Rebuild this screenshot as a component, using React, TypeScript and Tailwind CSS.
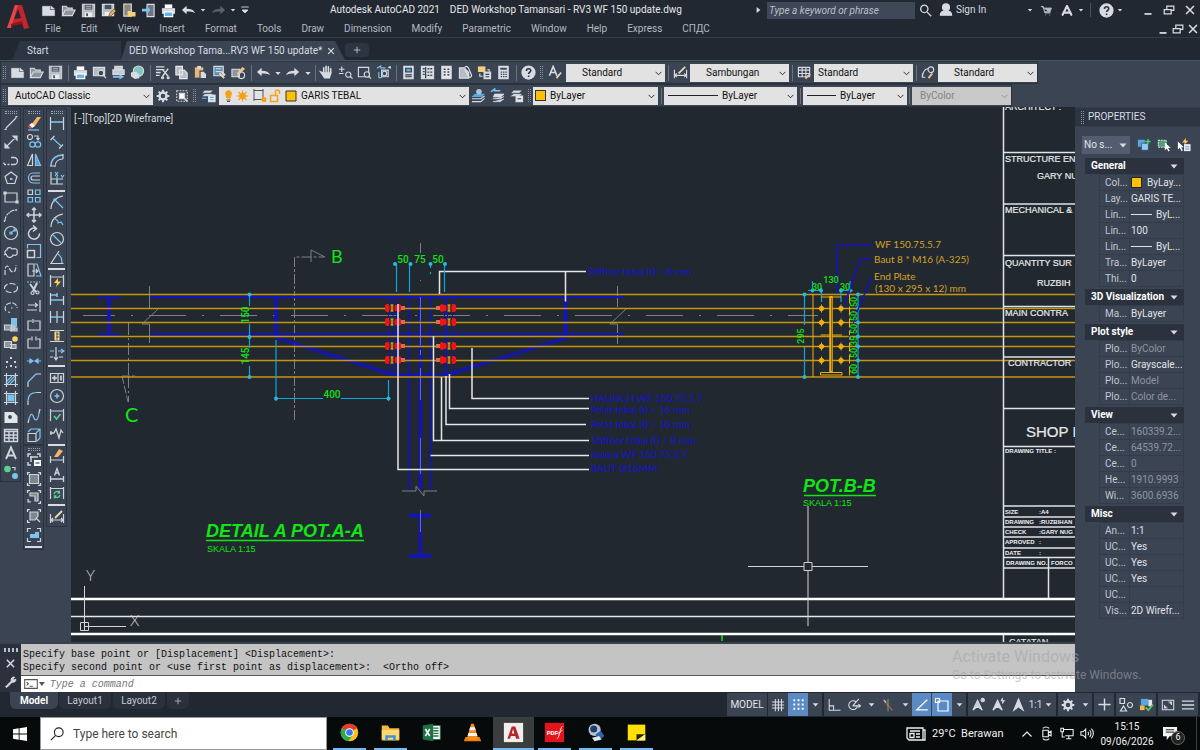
import type { ReactNode } from 'react';

const LIGHT = '#d8dce2';
const BLUE = '#7cc3ee';

/* 16x16 glyphs, stroked with currentColor unless a shape says otherwise */
const glyphs: Record<string, ReactNode> = {
  new: <path d="M1.500 3.500h8v4h5v6h-13zM10.500 3v3.500h4z" fill={LIGHT} strokeWidth="0.5" />,
  open: <path d="M1.500 13.500v-10h4l1.500 2h5v2M1.500 13.500l3-6h10.500l-3 6z" fill="#8d949e" />,
  save: (
    <g>
      <path d="M1.500 1.500h13v13h-13z" fill="#b9bec6" stroke="#c9cdd3" />
      <path d="M4 2h8v5h-8z" fill="#4a5260" stroke="none" />
      <path d="M5 3.500h6M5 5.500h6" strokeWidth="0.800" />
      <path d="M4 10h8v5h-8z" fill="#e8eaed" stroke="none" />
      <path d="M5.500 11h2v3h-2z" fill="#4a5260" stroke="none" />
    </g>
  ),
  saveas: (
    <g>
      <path d="M1.500 1.500h12v12h-12z" fill="#b9bec6" />
      <path d="M4 2h7v4.500h-7z" fill="#4a5260" stroke="none" />
      <path d="M4 9.500h5v4h-5z" fill="#f0f0f0" stroke="none" />
      <path d="M8 15l1-3.500 5-5 2 2-5 5z" fill="#f2b25c" stroke="#3a2a18" strokeWidth="0.600" />
    </g>
  ),
  openMobile: (
    <g>
      <path d="M3 1h8v13h-8z" fill="#8b8778" />
      <path d="M7 14.500v-6h3l1 1h4.500v5z" fill="#f4cf7c" stroke="none" />
    </g>
  ),
  saveMobile: (
    <g>
      <path d="M6.500 1.500h7.500v13h-7.500z" fill="#6f7680" />
      <path d="M1 6h5v-3l4 4.500-4 4.500v-3h-5z" fill={BLUE} stroke="none" />
    </g>
  ),
  print: (
    <g>
      <path d="M4 1.500h8v4h-8z" fill="#fff" stroke="none" />
      <path d="M1 5.500h14v6h-14z" fill="#d8dce2" stroke="none" />
      <path d="M3.500 9.500h9v5h-9z" fill="#66b5ea" stroke="#fff" />
    </g>
  ),
  undo: <path d="M1 7.500l5-4.500v3c5 0 8 1.500 9 5-2.500-2-5-2-9-2v3z" fill={LIGHT} stroke="none" />,
  redo: <path d="M15 7.500l-5-4.500v3c-5 0-8 1.500-9 5 2.500-2 5-2 9-2v3z" fill="currentColor" stroke="none" />,
  caret: <path d="M4.500 6.500h7l-3.500 4z" fill={LIGHT} stroke="none" />,
  customise: <path d="M3 4h10M4 8h8l-4 4z" fill={LIGHT} />,
  search: <path d="M6.500 1.500a4.500 4.500 0 1 0 .01 0zM10 10l5 5" strokeWidth="1.600" />,
  user: <path d="M8 1a3.500 3.500 0 0 1 0 8a3.500 3.500 0 0 1 0-8M1.500 14c0-4 3-5 6.500-5s6.500 1 6.500 5z" fill={LIGHT} />,
  cart: <path d="M1 3h3l2 8h7M4 5h10l-1.500 4.500h-7.500M6.500 13.500h1M11.500 13.500h1" fill="#b6bcc5" />,
  adsk: <path d="M8 3.500L3 13.500M8 3.500l5 10M4 11h8" strokeWidth="2.400" strokeLinecap="round" />,
  help: (
    <g>
      <circle cx="8" cy="8" r="7" fill={LIGHT} />
      <path d="M5.800 6.300c0-3 4.600-3 4.600-.2 0 1.700-2.300 1.600-2.300 3.600M8.100 11.300v1.400" stroke="#2c3440" strokeWidth="1.700" />
    </g>
  ),
  minimise: <path d="M4 12.500h8" strokeWidth="2" />,
  restore: <path d="M2.500 7.500h8v5h-8zM5.500 7v-3.500h8v5h-3" strokeWidth="1.400" />,
  close: <path d="M3.500 3.500l9 9M12.500 3.500l-9 9" strokeWidth="1.800" />,
  preview: (
    <g>
      <path d="M1.500 2.500h12v9h-12z" fill="#b6bcc5" />
      <circle cx="9.500" cy="8.500" r="3" fill="#3b4453" />
      <path d="M12 11l3 3" />
    </g>
  ),
  publish: (
    <g>
      <path d="M4 1.500h8v3h-8zM2 5h12v5h-12z" fill="#c8ccd2" />
      <path d="M2 11.500h7v-2l5 3-5 3v-2h-7z" fill={BLUE} stroke="none" />
    </g>
  ),
  globe: (
    <g>
      <circle cx="9" cy="6.500" r="5.500" fill="#7fc9a0" />
      <path d="M6 3l4 2-1 4 4 1" stroke={BLUE} strokeWidth="2" />
      <path d="M1 8l5-1 4 3v4l-5 1-4-3z" fill="#d8dce2" stroke="none" />
    </g>
  ),
  cut: <path d="M1 2h9M1 5h9M1 8h5M1 11h4M14 4l-6 8M8 5l6 7M8 12.500h.1a1 1 0 1 1-.1 0M14 12.500h.1a1 1 0 1 1-.1 0" strokeWidth="1.400" />,
  copy: <path d="M2 1.500h7v9h-7zM6 5.500h5l3 3v6h-8z" fill="#b6bcc5" stroke="#e8eaed" />,
  paste: (
    <g>
      <path d="M2 2.500h9v11h-9z" fill="#e6b673" stroke="none" />
      <path d="M4.500 1h4v3h-4z" fill="#d8dce2" stroke="none" />
      <path d="M7.500 6.500h4l3 3v5h-7z" fill="#d8dce2" stroke="#3b4453" />
    </g>
  ),
  match: (
    <g>
      <path d="M2 1.500h10v10h-10z" fill="#5a8fb5" />
      <path d="M4 4h6M4 7h6" />
      <path d="M8 9l5 5M10 7l4 4" stroke="#f0d9b8" strokeWidth="2" />
    </g>
  ),
  blockEdit: (
    <g>
      <path d="M1 4.500h8v8h-8z" fill="#8d949e" />
      <circle cx="11" cy="11" r="3.500" />
      <path d="M6 9l6-7 3 2-6 6z" fill="#f0c193" stroke="none" />
    </g>
  ),
  pan: <path d="M5 8v-5M7.500 7.500v-6M10 7.500v-5.500M12.500 9v-5M2 7.500l4 6h5l1.500-5h-8z" strokeWidth="1.700" strokeLinecap="round" fill={LIGHT} />,
  zoomRt: <path d="M1 4.500h6M4 1.500v6M1 9h5M11 7.500a2.800 2.800 0 1 0 .01 0M13 12l2.500 2.500" />,
  zoomWin: (
    <g>
      <path d="M1.500 2.500h11v10h-11z" />
      <circle cx="10.500" cy="10" r="2.800" fill="#3b4453" />
      <path d="M12.500 12l2.500 2.500" />
    </g>
  ),
  zoomPrev: (
    <g>
      <path d="M1 3.500l4-2.500v2h5M6 13.500h-3v-6" stroke={BLUE} />
      <path d="M6 5.500h7v7h-7zM15 1v3M13 2.500h3" />
      <circle cx="9" cy="9" r="2.500" fill="#3b4453" />
    </g>
  ),
  palette: (
    <g>
      <path d="M3 1.500h10v13h-10z" fill="#d8dce2" />
      <path d="M5 3.500h6v4h-6z" fill="#58a8e0" stroke="#2b3644" />
      <path d="M4.500 10.500h7M4.500 12.500h7" stroke="#2b3644" />
    </g>
  ),
  design: (
    <g>
      <path d="M1.500 1.500h13v13h-13z" fill="#d8dce2" />
      <path d="M6 2v12M3 4h2M3 7h2M3 10h2M8 4h2M11 4h2M8 7.500h2M11 7.500h2M8 11h2M11 11h2" stroke="#3b4453" strokeWidth="1.400" />
    </g>
  ),
  toolPal: (
    <g>
      <path d="M3 1.500h10v13h-10z" fill="#e2e5e9" />
      <path d="M5 4.500h2M9 4.500h2M5 7.500h2M9 7.500h2M5 10.500h2M9 10.500h2" stroke="#3b4453" strokeWidth="1.600" />
    </g>
  ),
  sheet: (
    <g>
      <path d="M1.500 3h5l5 5v6h-10z" fill="#b6bcc5" />
      <path d="M7 3c2-3 4-1 5 2l2.500 6c0 3-3 3-4 0l-3-6" stroke="#e8eaed" />
    </g>
  ),
  markup: (
    <g>
      <path d="M1 1.500h8v6h-8z" fill="#f4cf7c" stroke="none" />
      <path d="M7.500 7.500h7v7h-7z" fill="#d8dce2" />
      <path d="M3 9v3h3M11 5h2v2" stroke="#e2e5e9" />
      <path d="M9 10h4M9 12.500h4" stroke="#3b4453" />
    </g>
  ),
  calc: (
    <g>
      <path d="M3 1.500h10v13h-10z" fill="#d8dce2" />
      <path d="M4.500 4h7" stroke="#3b4453" strokeWidth="2" />
      <path d="M5 7.500h1.500M7.500 7.500h1.500M10 7.500h1.500M5 10h1.500M7.500 10h1.500M10 10h1.500M5 12.500h1.500M7.500 12.500h1.500M10 12.500h1.500" stroke="#3b4453" strokeWidth="1.300" />
    </g>
  ),
  textStyle: (
    <g>
      <path d="M1.500 11.500l4-10 4 10M3 8h5" strokeWidth="1.700" />
      <path d="M9 14l5-6" stroke="#f0d9b8" strokeWidth="1.800" />
    </g>
  ),
  dimStyle: (
    <g>
      <path d="M1.500 5v9M14.500 5v9M2 11h12M4 9l-2 2 2 2M12 9l2 2-2 2" />
      <path d="M6 9l7-7" stroke="#f0d9b8" strokeWidth="1.800" />
    </g>
  ),
  tableStyle: (
    <g>
      <path d="M1.500 2.500h12v10h-12zM1.500 5.500h12M1.500 9h12M5.500 2.500v10M9.500 2.500v10" />
      <path d="M9 14.500l5-5" stroke="#f0c193" strokeWidth="2" />
    </g>
  ),
  mleader: (
    <g>
      <path d="M1.500 12c1-6 3-8 6-8M1.500 9v4h3" />
      <circle cx="10.500" cy="5" r="3" />
      <path d="M8 14l4-5" stroke="#f0c193" strokeWidth="2" />
    </g>
  ),
  gear: (
    <g>
      <circle cx="8" cy="8" r="4" strokeWidth="2.800" />
      <path d="M8 .8v3M8 12.200v3M.8 8h3M12.200 8h3M3 3l2 2M11 11l2 2M13 3l-2 2M5 11l-2 2" strokeWidth="2.200" />
    </g>
  ),
  wsSettings: (
    <g>
      <path d="M2 2h12v12h-12z" strokeDasharray="2 1.300" />
      <path d="M5 5h6v6h-6z" fill="#fff" />
      <path d="M10 10l4 4" strokeWidth="2" />
    </g>
  ),
  layerProps: (
    <g>
      <path d="M4 2.500h9l-3 3h-9zM4 6h9l-3 3h-9z" fill="#d8dce2" stroke="#3b4453" strokeWidth="0.600" />
      <path d="M8 7.500h7v7h-7z" fill="#e9ebee" />
      <path d="M1 11h5M9.500 10h4M9.500 12.500h4" stroke="#58a8e0" />
    </g>
  ),
  layerMake: (
    <g>
      <path d="M4 6h11l-3.500 3.500h-11z" fill="#58a8e0" stroke="none" />
      <path d="M1 11.500h9.500l4-3M1 14.500h9.500l4-3.500" stroke="#d8dce2" />
      <circle cx="8.500" cy="4" r="3" fill="#a6c5dc" stroke="none" />
    </g>
  ),
  layerPrev: (
    <g>
      <path d="M1 4l4-3v2h6" stroke={BLUE} strokeWidth="1.600" />
      <path d="M5 6.500h10l-3.500 3h-8zM3 11.500h8l4-2.500M3 14.500h8l4-3" stroke="#d8dce2" fill="#d8dce2" strokeWidth="0.900" />
    </g>
  ),
  layerState: (
    <g>
      <path d="M5 2.500h9l-3 3h-9zM5 6h9l-3 3h-10z" fill="#d8dce2" stroke="#3b4453" strokeWidth="0.500" />
      <path d="M7.500 8.500h7v6h-7z" fill="#e9ebee" />
      <path d="M9 11.500h4" stroke="#3b4453" />
    </g>
  ),
  /* draw column */
  line: <path d="M3 13L13 3M1.500 14.500h1.500v-1.500M13 3v-1.500h1.500" />,
  xline: <path d="M3 13L13 3M2 14v-4l4 4zM14 2v4l-4-4z" fill={LIGHT} />,
  pline: <path d="M1 12.500h2M4.500 12.500h2M8 12.500h3a3 3 0 0 0 0-7h-3M1 12v-1.500" strokeWidth="1.300" />,
  polygon: (
    <g>
      <path d="M8 2l6 4.500-2.300 7h-7.400l-2.300-7z" />
      <path d="M7 8h2.500v2h-2.500z" fill={BLUE} stroke="none" />
    </g>
  ),
  rect: <path d="M2 4h12v9h-12zM1 3h2v2h-2zM13 12h2v2h-2z" />,
  arc: <path d="M2 14c0-3 1-5 3-7.500M7 5c2-1.500 4-2 7-2M1.500 13v2M5 6h2M13 2v2" strokeDasharray="5 1" />,
  circle: (
    <g>
      <circle cx="8" cy="8" r="6.500" />
      <path d="M8 8l4-3.500M7 7h2v2h-2zM11 4h2v2h-2z" stroke={BLUE} />
    </g>
  ),
  cloud: <path d="M3 10c-2-1-1-4 1-4 0-3 4-3 5-1 3-1 6 0 5 3 1 3-2 4-4 3-1 3-5 3-6 1M3 10l-2 1M3 10l1 2" />,
  spline: <path d="M2 13v-1c0-3 0-8 2-8s2 3 4 5 5 1 5-5v-1" strokeDasharray="5 1.500" />,
  ellipse: <ellipse cx="8" cy="8" rx="6.500" ry="4.500" strokeDasharray="6 2" />,
  ellipseArc: <path d="M3 12c-3-5 2-9 7-8 3 1 4 3 4 5M8 9h1.500M5 13l2 .5" strokeDasharray="5 1.500" />,
  insert: (
    <g>
      <path d="M8 1h6v9h-6z" fill={BLUE} stroke="none" />
      <path d="M1.500 8h7v5h-7zM7 11h7v3h-7" fill="#8d949e" />
      <circle cx="10" cy="11" r="2" fill="#b6bcc5" />
    </g>
  ),
  makeBlock: (
    <g>
      <path d="M1.500 6.500h7v6h-7zM7 9.500h6v4h-6" fill="#8d949e" />
      <circle cx="12" cy="4" r="2.800" fill="#ffd36a" stroke="none" />
    </g>
  ),
  point: <path d="M7 4h2M3 8h2M11 8h2M7 12h2M12 13h1.500M3 13h1" strokeWidth="2" />,
  hatch: (
    <g>
      <path d="M1 3.500h14M1 12.500h14M3.500 1v14M12.500 1v14" />
      <path d="M4 9l5-5M4 12l8-8M7 12l5-5" stroke={BLUE} />
    </g>
  ),
  gradient: (
    <g>
      <path d="M1 3.500h14M1 12.500h14M3.500 1v14M12.500 1v14" />
      <path d="M4.500 4.500h7v7h-7z" fill={BLUE} stroke="none" />
    </g>
  ),
  region: (
    <g>
      <path d="M1.500 3h9l4 4v7h-13z" fill="#e2e5e9" stroke="none" />
      <circle cx="7" cy="8" r="1.900" fill="#3b4453" stroke="none" />
    </g>
  ),
  table: <path d="M1.500 2.500h13v12h-13zM1.500 4.500h13M1.500 8h13M1.500 11h13M6 4v10M10.500 4v10" strokeWidth="1.400" />,
  mtext: <path d="M3 14L8 2.500l5 11.500M4.500 10.500h7" strokeWidth="1.900" />,
  addSel: (
    <g>
      <circle cx="4.500" cy="5" r="3.300" fill="#5fce91" stroke="none" />
      <circle cx="12" cy="12" r="3" fill={BLUE} stroke="none" />
      <path d="M9 3.500h3v3" />
    </g>
  ),
  /* modify column */
  erase: (
    <g>
      <path d="M5 10l6-8h4l-6 9z" fill="#f4b467" stroke="none" />
      <path d="M3 10l3 3 3-2-3-3z" fill="#fff" stroke="none" />
      <path d="M2 11l2 3 2-1-3-3z" fill="#e0514b" stroke="none" />
      <path d="M2 15h11" stroke={BLUE} />
    </g>
  ),
  copyObj: (
    <g>
      <circle cx="4" cy="4" r="2.500" />
      <path d="M8 3h4v3M10.500 5l1.500 2 1.500-2" />
      <circle cx="6.500" cy="11.500" r="2.700" stroke={BLUE} />
      <circle cx="12" cy="11.500" r="2.700" stroke={BLUE} />
    </g>
  ),
  mirror: (
    <g>
      <path d="M6.500 2v11.500h-5z" />
      <path d="M9.500 2v11.500h5z" fill="#5f9cc4" stroke={BLUE} />
    </g>
  ),
  offset: (
    <g>
      <path d="M14 3h-7c-6 0-6 10 0 10h7" stroke={BLUE} />
      <path d="M14 6h-7c-2.500 0-2.500 4 0 4h7" />
    </g>
  ),
  array: (
    <g>
      <path d="M2 2h4.500v4.500h-4.500z" />
      <path d="M9.500 2h4.500v4.500h-4.500zM2 9.500h4.500v4.500h-4.500zM9.500 9.500h4.500v4.500h-4.500z" stroke={BLUE} />
    </g>
  ),
  move: <path d="M8 1v14M1 8h14M6 3l2-2 2 2M6 13l2 2 2-2M3 6l-2 2 2 2M13 6l2 2-2 2" strokeWidth="1.500" />,
  rotate: <path d="M10 3.500a5.500 5.500 0 1 0 3.500 5M7 .5l3.500 3-3.500 3" strokeWidth="1.500" />,
  scale: (
    <g>
      <path d="M1.500 7.500h7v7h-7z" strokeWidth="1.500" />
      <path d="M1.500 5.500v-4h13v13h-4" stroke={BLUE} />
    </g>
  ),
  stretch: (
    <g>
      <path d="M2 2h6v12h-6zM6 9h6M10 7l2 2-2 2" />
      <path d="M9 2h2l4 12h-5" stroke={BLUE} />
    </g>
  ),
  trim: (
    <g>
      <path d="M1 2h13" strokeDasharray="2 1" stroke={BLUE} />
      <path d="M4 4l6 8M11 3l-4 8" strokeWidth="2" />
      <circle cx="6.500" cy="13" r="1.500" />
      <circle cx="11.500" cy="12.500" r="1.500" />
    </g>
  ),
  extend: <path d="M2 7h9M9 5l2.500 2L9 9M14 2v12M1 12h10" />,
  breakPt: <path d="M8 4h6v9h-12v-9h4M7 2v4" />,
  breakSel: <path d="M5 4h-3v9h12v-9h-3M6 1.500v4M10 1.500v4" />,
  join: <path d="M1 8h5M10 8h5M4 6l3 2-3 2zM12 6l-3 2 3 2z" stroke={BLUE} fill={BLUE} />,
  chamfer: (
    <g>
      <path d="M2 15v-5M10 2h5" />
      <path d="M2 10l8-8" stroke={BLUE} />
    </g>
  ),
  fillet: (
    <g>
      <path d="M2 15v-4M11 2.500h4" />
      <path d="M2 11c0-6 3-8.500 9-8.500" stroke={BLUE} />
    </g>
  ),
  blend: (
    <g>
      <path d="M2 15l1-4M13 5l1-4" />
      <path d="M3 11c2-8 4-4 5-1s4 3 5-5" stroke={BLUE} />
    </g>
  ),
  explode: (
    <g>
      <path d="M2 6.500h8v8h-8z" />
      <path d="M5 2h9v9M2 5l3-3M10 6l4-4M11 14l3-3" stroke={BLUE} />
    </g>
  ),
  groupEdit: (
    <g>
      <path d="M2 5v-3h3M11 2h3v3M2 10v3h3M4 5h8M5 4v6" strokeWidth="1.500" />
      <path d="M8 8h7v6h-7z" fill="#fff" stroke="none" />
      <path d="M9.500 11h4" stroke="#3b4453" />
    </g>
  ),
  group: <path d="M3.500 3.500h9v9h-9zM1.500 4v-2.500h2.500M12 1.500h2.500v2.500M1.500 12v2.500h2.500M12 14.500h2.500v-2.500" fill="#7d858f" />,
  ungroup: <path d="M4 4h8v8h-3v-5h-5zM1.500 4v-2.500h2.500M12 1.500h2.500v2.500M12 14.500h2.500v-2.500M2 10v3h3" fill="#7d858f" />,
  groupSel: <path d="M4 4h8v4l-3 4h-5zM10 10l4 4M1.500 4v-2.500h2.500M12 1.500h2.500v2.500M1.500 12v2.500h2.500" fill="#7d858f" />,
  groupBox: (
    <g>
      <path d="M1.500 5v-3.500h3.500M11 1.500h3.500v3.500M1.500 11v3.500h3.500M11 14.500h3.500v-3.500" />
      <path d="M4 7h5v-2h4v6h-9z" fill={BLUE} stroke="none" />
    </g>
  ),
  /* dimension column */
  dimLinear: (
    <g>
      <path d="M1.500 2v13M14.500 2v13" />
      <path d="M2 7h12" stroke={BLUE} strokeWidth="1.600" />
    </g>
  ),
  dimAligned: (
    <g>
      <path d="M1.500 6l4-4M10 14.500l4-4" />
      <path d="M4 4.500l8 7.500" stroke={BLUE} />
    </g>
  ),
  dimArc: (
    <g>
      <path d="M2 14c0-7 5-11 12-11" stroke={BLUE} strokeWidth="1.600" />
      <path d="M6 15c0-5 3-8 8-8M1 14h5M14 2v5" />
    </g>
  ),
  dimOrd: (
    <g>
      <path d="M2 2v12h12M2 9h12M8 9v5" />
      <path d="M6 2l3 4M9 2l-3 4M12 5l1.500 2 1.500-2M8 6v8" stroke={BLUE} />
    </g>
  ),
  dimRadius: (
    <g>
      <path d="M2 15c0-7 5-12 12-13" />
      <path d="M5 5l9 9M5 8v-3h3" stroke={BLUE} />
    </g>
  ),
  dimJog: (
    <g>
      <path d="M2 15c0-7 5-12 12-13" />
      <path d="M5 6l4 3v2l3-1 2 3" stroke={BLUE} />
    </g>
  ),
  dimDia: (
    <g>
      <circle cx="8" cy="8" r="6.500" />
      <path d="M4 4l8 8" stroke={BLUE} />
    </g>
  ),
  dimAngle: (
    <g>
      <path d="M10 2L2 14.500h12.500" />
      <path d="M9 5c3 2 4 5 4 9" stroke={BLUE} />
    </g>
  ),
  dimQuick: (
    <g>
      <path d="M1.500 2v12M14.500 2v12M2 4h12" />
      <path d="M9 5l-4 5h3l-1 4 5-5.500h-3z" fill="#ffd04a" stroke="none" />
    </g>
  ),
  dimBase: (
    <g>
      <path d="M1.500 2v12M8 2v4M14.500 5v9" />
      <path d="M2 4h6M2 9h12" stroke={BLUE} strokeWidth="1.500" />
    </g>
  ),
  dimCont: (
    <g>
      <path d="M1.500 2v12M8 2v12M14.500 2v12" />
      <path d="M2 8h12" stroke={BLUE} strokeWidth="1.500" />
    </g>
  ),
  dimSpace: (
    <g>
      <path d="M1 2.500h14M1 13.500h14" />
      <path d="M5.500 3.500h5v9h-5z" fill="#ffd98a" stroke="none" />
      <path d="M8 4v8M7 6h3M7 9h3" stroke="#3b4453" strokeWidth="0.800" />
    </g>
  ),
  dimBreak: (
    <g>
      <path d="M7 1v12M5 11l2 3 2-3M1 11h3M10 11h4" />
      <path d="M1 5h4M9 5h5M12 3l3 2-3 2" stroke={BLUE} />
    </g>
  ),
  tolerance: (
    <g>
      <path d="M1.500 3.500h13v9h-13zM9 3.500v9" />
      <path d="M3 8h5M5.500 5.500v5M12 5.500v5" strokeWidth="1.700" />
    </g>
  ),
  centerMark: (
    <g>
      <circle cx="8" cy="8" r="6.500" />
      <path d="M8 5.500v5M5.500 8h5" stroke={BLUE} strokeWidth="1.500" />
    </g>
  ),
  inspect: (
    <g>
      <path d="M1.500 2v12M14.500 2v12M2 4h12" />
      <path d="M5 9l2.500 3 4-5" stroke="#5fce91" strokeWidth="1.500" />
    </g>
  ),
  jogLine: <path d="M1 8h4M2 6v4M5 8l2-4 3 9 2-8 2 3" strokeWidth="1.300" />,
  dimEdit: (
    <g>
      <path d="M1.500 8v7M14.500 8v7M2 12h12" />
      <path d="M5 9l5-8 4 2-5 6z" fill="#f4b467" stroke="none" />
    </g>
  ),
  dimText: <path d="M1.500 9v6M14.500 9v6M2 12h12M5.500 8.500l2.500-7 2.500 7M6.500 6h3" strokeWidth="1.300" />,
  dimUpdate: (
    <g>
      <path d="M1.500 2v12M14.500 2v12M2 3.500h12" />
      <path d="M5 9a3.200 3.200 0 0 1 5.500-1.500M11 10a3.200 3.200 0 0 1-5.500 1.500M10.500 5.500v2.500h-2M5.500 13.500v-2.500h2" stroke="#5fce91" strokeWidth="1.300" />
    </g>
  ),
  /* status bar */
  grid: <path d="M5 1v14M8.500 1v14M12 1v14M1 4.500h14M1 8h14M1 11.500h14" />,
  snap: (
    <path
      d="M2.500 3.500h2M7 3.500h2M11.500 3.500h2M2.500 8h2M7 8h2M11.500 8h2M2.500 12.500h2M7 12.500h2M11.500 12.500h2"
      stroke="#fff"
      strokeWidth="2"
    />
  ),
  ortho: <path d="M2.500 1v13h13M2.500 9h5v5" />,
  polar: <path d="M10.500 4.500a5 5 0 1 0 1.500 4.500M6.500 9h9M6.500 9l7-8M13 7l2.500 2-2.500 2" />,
  iso: (
    <g>
      <path d="M3 3l10 11" stroke="#c95058" strokeWidth="1.400" />
      <path d="M8 1v14" stroke="#5fae6d" />
      <path d="M3 2l3 3" />
    </g>
  ),
  otrack: <path d="M14 2L2 13.500h12.500" stroke="#fff" strokeWidth="1.400" />,
  osnap: <path d="M4 4h10v10h-10zM1.500 1.500h4v4h-4z" stroke="#fff" fill="#5a8bc4" />,
  annoVis: <path d="M7 3.500l-5 10.500 5-4 5 4zM12.500 1.500a1.800 1.800 0 1 0 .01 0" fill={LIGHT} fillOpacity="0.900" />,
  annoAuto: <path d="M7 3.500l-5 10.500 5-4 5 4zM12.500 1l-1.500 3h3l-2 3" fill={LIGHT} />,
  anno: <path d="M8 2l-5 12 5-3.500 5 3.500z" fill={LIGHT} />,
  plus: <path d="M8 1.500v13M1.500 8h13" strokeWidth="1.500" />,
  isolate: <path d="M2 1.500h4.500v5h-4.500zM12 5.500a2.500 2.500 0 1 0 .01 0M5.500 9l3 5h-6z" />,
  hardware: (
    <g>
      <path d="M2 2h8v7h-8z" fill="#58a8e0" stroke="none" />
      <path d="M10 3h4v7h-4z" fill="#e2e5e9" stroke="none" />
      <path d="M1 9h5v5h-5z" fill="#f4b94a" stroke="none" />
      <path d="M7 11l3 3 5-6" stroke="#5bc25b" strokeWidth="2" />
    </g>
  ),
  clean: <path d="M1.500 2.500h13v11h-13zM4 8v3.500h3.500M12 8v-3.500h-3.500M4 11.500l2-2M12 4.500l-2 2" />,
  menu: <path d="M1 3.500h14M1 8h14M1 12.500h14" strokeWidth="1.500" />,
  /* properties palette */
  pickAdd: (
    <g>
      <path d="M1 2h8v8h-8z" fill="#58a8e0" stroke="none" />
      <path d="M5 6h8v8h-8z" fill="#8fcbf2" stroke="#3b4453" strokeWidth="0.800" />
      <path d="M12.500 1v6M9.500 4h6" stroke="#4bd07e" strokeWidth="1.600" />
    </g>
  ),
  selectObj: (
    <g>
      <path d="M1.500 2.500h9v8h-9z" fill="#4f9f74" strokeDasharray="2 1" />
      <path d="M9 5v9l2.200-2 1.800 3.500 1.500-1-1.800-3h3z" fill="#fff" stroke="none" />
    </g>
  ),
  quickSel: (
    <g>
      <path d="M1 4v9l2.200-2 2 4 1.500-1-2-3.500h3z" fill="#fff" stroke="none" />
      <path d="M10 0l-4 5h3l-1 3 5-5h-3z" fill="#ffd04a" stroke="none" />
      <path d="M8 7h7.500v8h-7.500z" fill="#e9ebee" stroke="none" />
      <path d="M9.500 10h4.500M9.500 12.500h4.500" stroke="#58a8e0" />
    </g>
  ),
  wrench: <path d="M2 14.500l7-7c-1-3 1-5.500 4-5l-2 2.500 1 1.500 2.500-1.500c.5 3-2 4.500-4.500 3.800l-6.500 6.500z" fill={LIGHT} />,
  cmd: <path d="M.8 3h14.400v10h-14.400zM3 6l2 1.800-2 1.800M6.500 10.500h3.500" />,
};

function Icon({ name, size = 'size-4' }: { name: string; size?: string }) {
  return (
    <svg viewBox="0 0 16 16" className={`${size} shrink-0`} fill="none" stroke="currentColor" strokeWidth="1.200" aria-hidden="true">
      {glyphs[name]}
    </svg>
  );
}

function Tool({ name, width = 'w-[19px]', size = 'size-4', tone = '' }: { name: string; width?: string; size?: string; tone?: string }) {
  return (
    <button type="button" aria-label={name} className={`flex h-full shrink-0 items-center justify-center ${width} ${tone}`}>
      <Icon name={name} size={size} />
    </button>
  );
}

function Tools({ names }: { names: string[] }) {
  return (
    <>
      {names.map((name) => (
        <Tool key={name} name={name} size="size-[15px]" />
      ))}
    </>
  );
}

function Sep({ width = 'w-[6px]' }: { width?: string }) {
  return (
    <span className={`flex justify-center ${width}`}>
      <span className="h-4 w-px bg-[#69727f]" />
    </span>
  );
}

function Grip() {
  return <span className="mx-[2px] h-[13px] w-[3px] shrink-0 border-x border-dotted border-[#8a929e]" />;
}

function Combo({
  label,
  value,
  width,
  pad = 'pl-4',
  disabled = false,
  children,
}: {
  label: string;
  value: string;
  width: string;
  pad?: string;
  disabled?: boolean;
  children?: ReactNode;
}) {
  return (
    <div className={`relative h-[18px] shrink-0 ${width} ${disabled ? 'bg-[#c9c9c9] text-[#858585]' : 'bg-[#e2e2e2] text-[#111]'}`}>
      <select aria-label={label} disabled={disabled} className={`block h-full w-full appearance-none text-[10px] opacity-100 outline-none ${pad}`}>
        <option>{value}</option>
      </select>
      {children && <div className="pointer-events-none absolute inset-y-0 left-1 flex items-center">{children}</div>}
      <svg viewBox="0 0 8 6" className="pointer-events-none absolute top-[7px] right-[3px] h-[5px] w-[7px]" fill="none" stroke="currentColor">
        <path d="M.5 1l3.500 3.500L7.500 1" />
      </svg>
    </div>
  );
}

const menus = ['File', 'Edit', 'View', 'Insert', 'Format', 'Tools', 'Draw', 'Dimension', 'Modify', 'Parametric', 'Window', 'Help', 'Express', 'СПДС'];

function Header() {
  return (
    <header className="flex h-[38px] shrink-0 border-b border-[#343c48] bg-[#222831] text-[#d8dce2]">
      <svg viewBox="0 0 28 32" className="mt-[2px] ml-1 h-8 w-7 shrink-0" aria-label="AutoCAD">
        <path d="M3 26L11 3h7l7 23-5 1-2-6-11 1-1 4z" fill="#c4252b" />
        <path d="M10 17l4-10 3 9z" fill="#222831" />
        <path d="M3 26L11 3h3L7 26z" fill="#e2484b" />
        <path d="M7 22l11-3 1 3-12 2z" fill="#8f171c" />
      </svg>
      <div className="flex min-w-0 flex-1 flex-col">
        <div className="flex h-5 items-center pl-[6px]">
          {['new', 'open', 'save', 'saveas', 'openMobile', 'saveMobile', 'print', 'undo'].map((n) => (
            <Tool key={n} name={n} width="w-5" size="size-[15px]" />
          ))}
          <Tool name="caret" width="w-[10px]" size="size-[10px]" />
          <Tool name="redo" width="w-5" size="size-[15px]" tone="text-[#5a626e]" />
          <Tool name="caret" width="w-[10px]" size="size-[10px]" />
          <Tool name="customise" width="w-[14px]" size="size-[12px]" />
          <h1 className="ml-[78px] text-[10px] whitespace-pre text-[#e4e7ea]">Autodesk AutoCAD 2021    DED Workshop Tamansari - RV3 WF 150 update.dwg</h1>
          <div className="ml-auto flex h-full shrink-0 items-center">
            <svg viewBox="0 0 5 8" className="mr-[6px] h-[6px] w-[5px]" fill="#d8dce2">
              <path d="M0 0l5 4-5 4z" />
            </svg>
            <input
              type="text"
              aria-label="Search help"
              placeholder="Type a keyword or phrase"
              className="h-[17px] w-[148px] bg-[#3f4858] px-[2px] text-[10px] italic outline-none placeholder:text-[#b9c0ca]"
            />
            <Tool name="search" width="w-[21px]" size="size-[13px]" />
            <Tool name="user" width="w-5" size="size-[14px]" />
            <button type="button" className="w-[68px] text-left text-[10px]">
              Sign In
            </button>
            <Tool name="caret" width="w-3" size="size-[10px]" />
            <Tool name="cart" width="w-[21px]" size="size-[13px]" tone="text-[#aeb4bd]" />
            <Tool name="adsk" width="w-5" size="size-[14px]" />
            <Tool name="caret" width="w-2" size="size-[10px]" />
            <span className="mx-[5px] h-[14px] w-px bg-[#4a525e]" />
            <Tool name="help" width="w-5" size="size-[15px]" />
            <Tool name="caret" width="w-2" size="size-[10px]" />
            <span className="w-[13px]" />
            <Tool name="minimise" width="w-[21px]" size="size-[14px]" />
            <Tool name="restore" width="w-[21px]" size="size-[14px]" />
            <Tool name="close" width="w-[21px]" size="size-[14px]" />
          </div>
        </div>
        <nav className="flex h-[17px] items-center gap-[20px] pl-[13px] text-[10px] text-[#b4bac3]">
          {menus.map((m) => (
            <button key={m} type="button">
              {m}
            </button>
          ))}
          <span className="ml-auto flex h-full text-[#d8dce2]">
            <Tool name="minimise" width="w-[15px]" size="size-[14px]" />
            <Tool name="restore" width="w-[15px]" size="size-[14px]" />
            <Tool name="close" width="w-[15px]" size="size-[14px]" />
          </span>
        </nav>
      </div>
    </header>
  );
}

function FileTabs() {
  return (
    <div className="flex h-[22px] shrink-0 items-end bg-[#222831] pl-[12px] text-[10px] text-[#d8dce2]">
      <button type="button" className="h-[19px] w-[109px] bg-[#2d3542] pl-[15px] text-left [clip-path:polygon(0_100%,8px_0,100%_0,100%_100%)]">
        Start
      </button>
      <div className="flex h-[19px] w-[224px] items-center gap-1 bg-[#3b4453] pl-2 [clip-path:polygon(0_100%,6px_0,214px_0,100%_100%)]">
        <span>DED Workshop Tama...RV3 WF 150 update*</span>
        <button type="button" aria-label="Close tab">
          <Icon name="close" size="size-[10px]" />
        </button>
      </div>
      <button type="button" aria-label="New tab" className="mb-[3px] flex h-[14px] w-[24px] items-center justify-center rounded bg-[#2d3542]">
        <Icon name="plus" size="size-[8px]" />
      </button>
    </div>
  );
}

function Toolbars() {
  return (
    <div className="shrink-0 border-t border-[#4a5362] bg-[#3b4453] text-[#d8dce2]">
      <div className="flex h-[23px] w-fit items-center border border-[#2a323e]">
        <Grip />
        <Tools names={['new', 'open', 'save']} />
        <Sep />
        <Tools names={['print', 'preview', 'publish', 'globe']} />
        <Sep />
        <Tools names={['cut', 'copy', 'paste', 'match', 'blockEdit']} />
        <Sep />
        <Tool name="undo" size="size-[15px]" />
        <Tool name="caret" width="w-[10px]" size="size-[12px]" />
        <Tool name="redo" size="size-[15px]" />
        <Tool name="caret" width="w-[11px]" size="size-[12px]" />
        <Sep width="w-[4px]" />
        <Tools names={['pan', 'zoomRt', 'zoomWin', 'zoomPrev']} />
        <Sep />
        <Tools names={['palette', 'design', 'toolPal', 'sheet', 'markup', 'calc']} />
        <Sep />
        <Tool name="help" size="size-[15px]" />
        <Grip />
        <Tool name="textStyle" width="w-[21px]" size="size-[15px]" />
        <Combo label="Text style" value="Standard" width="w-[99px]" />
        <Sep />
        <Tool name="dimStyle" size="size-[15px]" />
        <Combo label="Dimension style" value="Sambungan" width="w-[99px]" />
        <Sep />
        <Tool name="tableStyle" size="size-[15px]" />
        <Combo label="Table style" value="Standard" width="w-[99px]" pad="pl-1" />
        <Sep />
        <Tool name="mleader" size="size-[15px]" />
        <Combo label="Multileader style" value="Standard" width="w-[99px]" />
      </div>
      <div className="flex h-[23px] w-fit items-center border border-[#2a323e]">
        <Grip />
        <Combo label="Workspace" value="AutoCAD Classic" width="w-[145px]" pad="pl-[7px]" />
        <Tool name="gear" size="size-[14px]" />
        <Tool name="wsSettings" size="size-[14px]" />
        <Grip />
        <Tool name="layerProps" width="w-[21px]" size="size-[15px]" />
        <Combo label="Layer" value="GARIS TEBAL" width="w-[250px]" pad="pl-[82px]">
          <svg viewBox="0 0 76 16" className="h-4 w-[76px]" fill="none" stroke="#f5a21b">
            <path d="M5.500 2.500a3.200 3.200 0 0 1 2 5.500v2h-4v-2a3.200 3.200 0 0 1 2-5.500z" fill="#f5a21b" />
            <path d="M3.500 12h4M4 13.500h3" stroke="#555" />
            <circle cx="19.500" cy="8" r="3" fill="#f5a21b" />
            <path d="M19.500 2.500v11M14 8h11M15.500 4l8 8M23.500 4l-8 8" strokeWidth="1.200" />
            <path d="M31 2.500h9v9h-9zM30 2h2M39 2h2M30 12h2" stroke="#555" />
            <path d="M41 9v5M38.500 11.500h5M39 9.500l4 4M43 9.500l-4 4" strokeWidth="1.300" />
            <path d="M47.500 7.500h7v6h-7zM52.500 7v-3a2 2 0 0 1 4 0v2" strokeWidth="1.500" />
            <path d="M63 3h10v10h-10z" fill="#ffc000" stroke="#333" />
          </svg>
        </Combo>
        <Tools names={['layerMake', 'layerPrev', 'layerState']} />
        <Grip />
        <Combo label="Color control" value="ByLayer" width="w-[125px]" pad="pl-[17px]">
          <span className="-ml-[2px] size-[11px] border border-[#333] bg-[#ffc000]" />
        </Combo>
        <Sep />
        <Combo label="Linetype control" value="ByLayer" width="w-[133px]" pad="pl-[58px]">
          <span className="h-px w-[50px] bg-[#222]" />
        </Combo>
        <Sep />
        <Combo label="Lineweight control" value="ByLayer" width="w-[104px]" pad="pl-[37px]">
          <span className="h-px w-[29px] bg-[#222]" />
        </Combo>
        <Sep width="w-[5px]" />
        <Combo label="Plot style control" value="ByColor" width="w-[99px]" pad="pl-2" disabled />
      </div>
    </div>
  );
}

const drawTools = ['line', 'xline', 'pline', 'polygon', 'rect', 'arc', 'circle', 'cloud', 'spline', 'ellipse', 'ellipseArc', 'insert', 'makeBlock', 'point', 'hatch', 'gradient', 'region', 'table', 'mtext', 'addSel'];
const modifyTools = ['erase', 'copyObj', 'mirror', 'offset', 'array', 'move', 'rotate', 'scale', 'stretch', 'trim', 'extend', 'breakPt', 'breakSel', 'join', 'chamfer', 'fillet', 'blend', 'explode'];
const groupTools = ['groupEdit', 'group', 'ungroup', 'groupSel', 'groupBox'];
const dimTools = [
  'dimLinear', 'dimAligned', 'dimArc', 'dimOrd', '|',
  'dimRadius', 'dimJog', 'dimDia', 'dimAngle', '|',
  'dimQuick', 'dimBase', 'dimCont', 'dimSpace', 'dimBreak', '|',
  'tolerance', 'centerMark', 'inspect', 'jogLine', '|',
  'dimEdit', 'dimText', 'dimUpdate', '|',
  'dimStyle',
];

function ToolColumn({ names, height }: { names: string[]; height: string }) {
  return (
    <div className="w-[21px] border border-[#2a323e]">
      <div className="mx-auto mt-[2px] h-[3px] w-3 border-y border-dotted border-[#9aa2ad]" />
      <div className={`flex flex-col items-center ${height}`}>
        {names.map((n, i) =>
          n === '|' ? (
            <span key={i} className="h-[5px] w-full shrink-0 px-px pt-[2px]">
              <span className="block h-[2px] w-full bg-[#d8dce2]" />
            </span>
          ) : (
            <button key={i} type="button" aria-label={n} className="flex min-h-0 flex-1 items-center justify-center">
              <Icon name={n} size="size-4" />
            </button>
          ),
        )}
      </div>
    </div>
  );
}

function SideTools() {
  return (
    <div className="flex w-[71px] shrink-0 items-start gap-[2px] bg-[#3b4453] pt-px text-[#cfd4db]">
      <ToolColumn names={drawTools} height="h-[367px]" />
      <div>
        <ToolColumn names={modifyTools} height="h-[330px]" />
        <ToolColumn names={[...groupTools, '|']} height="h-[98px]" />
      </div>
      <ToolColumn names={dimTools} height="h-[412px]" />
    </div>
  );
}

const gridY = [294.500, 308.500, 322.500, 336.500, 346.500, 360.500, 377];
const boltY = [308, 322, 346, 360];
const blockLines = [152.500, 204, 255.500, 306.500, 357, 408.500, 446.500, 506, 517, 527, 537, 548, 557.500, 568];

const callouts: [string, number, number][] = [
  ['Stiffner tebal (t) = 8 mm', 588, 275],
  ['HAUNCH WF 150.75.5.7', 591, 402],
  ['Pelat tebal (t) = 16 mm', 591, 413],
  ['Pelat tebal (t) = 10 mm', 591, 428],
  ['Stiffner tebal (t) = 8 mm', 592, 444],
  ['Kolom WF 150.75.5.7', 591, 458],
  ['BAUT Ø16MM', 591, 472],
];

function VerticalText({ x, y, children }: { x: number; y: number; children: string }) {
  return (
    <text transform={`translate(${x} ${y}) rotate(-90)`} textAnchor="middle">
      {children}
    </text>
  );
}

function Bolt({ x, y, flip = 1 }: { x: number; y: number; flip?: number }) {
  return (
    <g transform={`translate(${x} ${y}) scale(${flip} 1)`}>
      <path d="M-10-3l2-1h2v8h-2l-2-1zM0-3h2l2-1 2 1v6l-2 1-2-1h-2z" fill="#f01414" />
      <path d="M-6-2h6v4h-6z" fill="#8a2020" />
      <path d="M-3-3v6M-4.500-3h3M-4.500 3h3" stroke="#e8d21a" />
      <path d="M6-2h4v4h-4z" fill="#d66a5e" />
    </g>
  );
}

/* Model space, in window coordinates shifted to the viewport's corner */
function Drawing() {
  return (
    <svg className="absolute inset-0 h-full w-full" fill="none" aria-label="Model space">
      <g transform="translate(-71 -107)">
        {/* grey centre lines and breaks */}
        <g stroke="#7b8087">
          <path d="M83 315.500h735" strokeDasharray="37 16 2 16" strokeDashoffset="5" />
          <path d="M149.500 286v22M149.500 324v19M142 324l16-15M142 324h7M617.500 286v21M617.500 324v20M610 324l16-15M610 324h7" />
          <path d="M294.500 420v-163h30" strokeDasharray="10 2 3 2" />
          <path d="M311 250v12M311 250l14 7" />
          <path d="M128.500 323v53M128.500 376v26" strokeDasharray="12 3 2 3" />
          <path d="M122 376h13M122 376l6 26" strokeDasharray="8 2" />
          <path d="M420.500 243v10M420.500 280v1" />
        </g>

        {/* steel members */}
        <g stroke="#1212c4">
          <path d="M98 297.500h22M98 334.500h22M150 297h474M150 334h474" strokeWidth="2" />
          <path d="M109 297v37M276 296v42M565.500 296v42" strokeWidth="3.500" />
          <path d="M277 338l111 35 8 2h49l8-2 113-35" strokeWidth="3.500" opacity="0.800" />
          <path d="M388.500 296v81M393 296v81M396.500 296v81M444.500 296v81M447.500 296v81M452.500 296v81" />
          <path d="M409.500 296v194M430.500 296v194" strokeWidth="1.500" />
          <path d="M420.500 296v194M420.500 516v40" strokeWidth="3" />
          <path d="M409 515.500h22M409 556h22" strokeWidth="3.500" />
        </g>
        <path d="M420.500 297v48M420.500 350v5M420.500 368v32M420.500 438v36M420.500 510v22" stroke="#6d7090" />
        <path d="M402 491h14v-5l8 10v-5h13" stroke="#7b8087" />

        {gridY.map((y) => (
          <path key={y} d={`M71 ${y}h1004`} stroke="#c7960f" strokeWidth="1.500" />
        ))}

        {boltY.map((y) => (
          <g key={y}>
            <Bolt x={395} y={y} />
            <Bolt x={446} y={y} flip={-1} />
          </g>
        ))}

        {/* leaders */}
        <g stroke="#e6e6e6" strokeWidth="1.500">
          <path d="M439.500 294v-22.500h146.500M565.500 271.500v30" />
          <path d="M472 348v50.500h117M449.500 374v34.500h139.500M446 376v48.500h140" />
          <path d="M433.500 336v104.500h155.500M441.500 377v63" />
          <path d="M430.500 455.500h158.500M398 304v165.500h191" />
        </g>
        <g fill="#1414d8" className="font-[Lato] text-[10px]">
          {callouts.map(([label, x, y]) => (
            <text key={y} x={x} y={y}>
              {label}
            </text>
          ))}
        </g>

        {/* dimensions */}
        <g stroke="#12a6d6" strokeWidth="1.200">
          <path d="M249.500 295v11M249.500 324v24M249.500 366v11" />
          <path d="M276 340v61M388.500 380v21M276 398.500h47M341 398.500h47" />
          <path d="M396.500 263v29M409.500 263v29M444.500 263v29M430.500 262v6M430.500 272v2" />
          <path d="M804.500 295v30M804.500 347v30M808 290.500h14M839 290.500h14M821.500 288v14M841 288v14M812.500 281v9M850 281v9M858 295v82" />
        </g>
        <g fill="#2bb7de">
          {[[249.500, 294.500], [249.500, 337], [249.500, 377], [276, 398.500], [388.500, 398.500], [395, 264], [410.500, 264], [430.500, 264], [445, 264], [804.500, 294.500], [804.500, 377], [812.500, 290.500], [821, 290.500], [841, 290.500], [850, 290.500]].map(([x, y]) => (
            <circle key={`${x}-${y}`} cx={x} cy={y} r="2" />
          ))}
          {gridY.map((y) => (
            <circle key={y} cx="858" cy={y} r="2" />
          ))}
        </g>

        {/* section B-B */}
        <g stroke="#f0ae0a">
          <path d="M813 294.500v82.500M821 297h20M820.500 335h21.500M820.500 372.500h21.500v2.500h-21.500z" />
          <path d="M849.500 294.500v82.500" strokeDasharray="9 3" />
          <path d="M831 296v77" strokeWidth="3.500" />
          <path d="M831.500 298v73" stroke="#8a6a14" />
          {boltY.map((y) => (
            <g key={y} fill="#f0ae0a">
              <path d={`M817.500 ${y}.5h8M821.500 ${y - 3.500}v8M837 ${y}.5h8M841 ${y - 3.500}v8`} />
              <circle cx="821.500" cy={y + 0.500} r="2.200" />
              <circle cx="841" cy={y + 0.500} r="2.200" />
            </g>
          ))}
        </g>
        <path d="M837 293v-47.500h36M844 306l16-46.500h12M857 312l15-36" stroke="#1212c4" strokeWidth="1.500" />
        <path d="M857 312l-10 32" stroke="#1212c4" strokeDasharray="6 2" />
        <g fill="#d3a226" className="font-[Lato] text-[10px]">
          <text x="875" y="248">WF 150.75.5.7</text>
          <text x="874" y="263">Baut 8 * M16 (A-325)</text>
          <text x="874" y="280">End Plate</text>
          <text x="875" y="292">(130 x 295 x 12) mm</text>
        </g>

        <g fill="#14e014" className="font-[Roboto] text-[10px] font-medium">
          <VerticalText x={249} y={315}>150</VerticalText>
          <VerticalText x={249} y={356}>145</VerticalText>
          <g textAnchor="middle">
            <text x="332" y="398">400</text>
            <text x="403" y="263">50</text>
            <text x="420" y="263">75</text>
            <text x="438" y="263">50</text>
          </g>
          <g textAnchor="middle" className="text-[9px]">
            <text x="831" y="283">130</text>
            <text x="817" y="290">30</text>
            <text x="845" y="290">30</text>
            <VerticalText x={804} y={336}>295</VerticalText>
            <VerticalText x={857} y={302}>50</VerticalText>
            <VerticalText x={857} y={316}>50</VerticalText>
            <VerticalText x={857} y={329}>50</VerticalText>
            <VerticalText x={857} y={341}>35</VerticalText>
            <VerticalText x={857} y={353}>50</VerticalText>
            <VerticalText x={857} y={369}>60</VerticalText>
          </g>
        </g>

        <g fill="#10e610" className="font-[Liberation_Sans]">
          <text x="331" y="263" className="font-[Lato] text-[18px]">B</text>
          <text x="125" y="422" className="font-[Lato] text-[20px]">C</text>
          <text x="206" y="537" className="text-[18px] font-bold italic">DETAIL A POT.A-A</text>
          <text x="803" y="492" className="text-[18px] font-bold italic">POT.B-B</text>
          <text x="207" y="552" className="text-[9px]">SKALA 1:15</text>
          <text x="803" y="506" className="text-[9px]">SKALA 1:15</text>
        </g>
        <path d="M206 540.500h158M804 495.500h72M722 634v7" stroke="#10e610" strokeWidth="1.500" />

        {/* title block */}
        <path d="M71 599h1004M71 634h1004" stroke="#fff" strokeWidth="2.500" />
        <path d="M71 616.500h1004" stroke="#e6e6e6" strokeWidth="1.500" />
        <path d="M1003.500 107v492M1003.500 635v7M1048.500 557v41" stroke="#e0e3e8" strokeWidth="1.500" />
        {blockLines.map((y) => (
          <path key={y} d={`M1003 ${y}h72`} stroke="#e0e3e8" strokeWidth="1.500" />
        ))}
        <g fill="#e8e8e8" stroke="#e8e8e8" strokeWidth="0.200" className="font-[Liberation_Sans] text-[9px]">
          <text x="1005" y="110">ARCHITECT :</text>
          <text x="1005" y="162">STRUCTURE EN</text>
          <text x="1005" y="213">MECHANICAL &amp;</text>
          <text x="1005" y="266">QUANTITY SUR</text>
          <text x="1005" y="316">MAIN CONTRA</text>
          <text x="1008" y="366">CONTRACTOR</text>
          <text x="1009" y="645">CATATAN</text>
          <text x="1037" y="179">GARY NU</text>
          <text x="1037" y="286">RUZBIH</text>
          <text x="1026" y="437" className="text-[15px]">SHOP D</text>
        </g>
        <g fill="#f0f0f0" className="font-[Liberation_Sans] text-[6px] font-bold">
          <text x="1005" y="453">DRAWING TITLE :</text>
          <text x="1005" y="514">SIZE</text>
          <text x="1039" y="514">:A4</text>
          <text x="1005" y="524">DRAWING</text>
          <text x="1039" y="524">:RUZBIHAN</text>
          <text x="1005" y="534">CHECK</text>
          <text x="1039" y="534">:GARY NUG</text>
          <text x="1005" y="544">APROVED</text>
          <text x="1039" y="544">:</text>
          <text x="1005" y="555">DATE</text>
          <text x="1039" y="555">:</text>
          <text x="1006" y="565">DRAWING NO.</text>
          <text x="1051" y="565">FORCO</text>
        </g>

        {/* crosshair and UCS */}
        <path d="M808 506v56M808 570v56M748 566.500h56M812 566.500h56M804 562.500h8v8h-8z" stroke="#d4d4d4" />
        <path d="M84.500 586v45M80.500 622.500h8v8h-8zM85 626.500h41" stroke="#d4d4d4" />
        <g fill="#d4d4d4" className="font-[Lato] text-[15px] font-light">
          <text x="86" y="581">Y</text>
          <text x="130" y="626">X</text>
        </g>
      </g>
    </svg>
  );
}

type Row = { label: string; value: string; dim?: boolean; mark?: 'swatch' | 'line' };

const sections: { title: string; rows: Row[] }[] = [
  {
    title: 'General',
    rows: [
      { label: 'Col...', value: 'ByLay...', mark: 'swatch' },
      { label: 'Lay...', value: 'GARIS TE...' },
      { label: 'Lin...', value: 'ByL...', mark: 'line' },
      { label: 'Lin...', value: '100' },
      { label: 'Lin...', value: 'ByL...', mark: 'line' },
      { label: 'Tra...', value: 'ByLayer' },
      { label: 'Thi...', value: '0' },
    ],
  },
  { title: '3D Visualization', rows: [{ label: 'Ma...', value: 'ByLayer' }] },
  {
    title: 'Plot style',
    rows: [
      { label: 'Plo...', value: 'ByColor', dim: true },
      { label: 'Plo...', value: 'Grayscale...' },
      { label: 'Plo...', value: 'Model', dim: true },
      { label: 'Plo...', value: 'Color de...', dim: true },
    ],
  },
  {
    title: 'View',
    rows: [
      { label: 'Ce...', value: '160339.2...', dim: true },
      { label: 'Ce...', value: '64539.72...', dim: true },
      { label: 'Ce...', value: '0', dim: true },
      { label: 'He...', value: '1910.9993', dim: true },
      { label: 'Wi...', value: '3600.6936', dim: true },
    ],
  },
  {
    title: 'Misc',
    rows: [
      { label: 'An...', value: '1:1' },
      { label: 'UC...', value: 'Yes' },
      { label: 'UC...', value: 'Yes' },
      { label: 'UC...', value: 'Yes' },
      { label: 'UC...', value: '' },
      { label: 'Vis...', value: '2D Wirefr...' },
    ],
  },
];

function Properties() {
  return (
    <aside className="w-[125px] shrink-0 bg-[#3b4453] text-[10px] text-[#e0e3e8]">
      <h2 className="flex h-5 items-center gap-[2px] border-y border-[#353e4b] bg-[#2d3542] pl-1 text-[#d8dce2]">
        <Grip />
        PROPERTIES
      </h2>
      <div className="mt-[9px] flex items-center pl-[7px]">
        <div className="relative h-[18px] w-[48px] bg-[#525d6f]">
          <select aria-label="Selection" className="h-full w-full appearance-none pl-[2px] outline-none">
            <option>No s...</option>
          </select>
          <span className="pointer-events-none absolute top-px -right-px">
            <Icon name="caret" />
          </span>
        </div>
        <span className="ml-1 flex h-4">
          <Tool name="pickAdd" width="w-5" size="size-[14px]" />
          <Tool name="selectObj" width="w-5" size="size-[14px]" />
          <Tool name="quickSel" width="w-5" size="size-[14px]" />
        </span>
      </div>
      <div className="mt-1 flex flex-col gap-[2px] pr-4 pl-[10px]">
        {sections.map((s) => (
          <section key={s.title}>
            <h3 className="flex h-4 items-center justify-between bg-[#2b323e] pr-[2px] pl-[6px] font-bold text-white">
              {s.title}
              <Icon name="caret" />
            </h3>
            <table className="ml-[14px] w-[85px] table-fixed border-collapse">
              <tbody>
                {s.rows.map((r, i) => (
                  <tr key={i} className="h-4">
                    <th scope="row" className="w-[30px] border border-[#333c4a] py-0 pr-0 pl-[5px] text-left leading-[15px] font-normal text-[#c3c9d1]">
                      {r.label}
                    </th>
                    <td className={`h-4 border border-[#333c4a] py-0 pr-0 pl-px leading-[15px] whitespace-nowrap ${r.dim ? 'text-[#8d95a1]' : ''}`}>
                      {r.mark === 'swatch' && <span className="mr-[5px] inline-block size-[11px] border border-[#222] bg-[#ffc000] align-[-2px]" />}
                      {r.mark === 'line' && <span className="mr-1 inline-block h-px w-[21px] bg-[#e0e3e8] align-[3px]" />}
                      {r.value}
                    </td>
                  </tr>
                ))}
              </tbody>
            </table>
          </section>
        ))}
      </div>
    </aside>
  );
}

function CommandLine() {
  return (
    <div className="flex h-[50px] shrink-0 border-t-2 border-[#3a424e] bg-[#2b323e]">
      <div className="flex w-[21px] shrink-0 flex-col items-center justify-between py-1 text-[#d8dce2]">
        <div className="h-[4px] w-[14px] border-y-2 border-dotted border-[#b9bfc8]" />
        <button type="button" aria-label="Close command line">
          <Icon name="close" size="size-[13px]" />
        </button>
        <button type="button" aria-label="Customize">
          <Icon name="wrench" size="size-[13px]" />
        </button>
      </div>
      <div className="flex min-w-0 flex-1 flex-col">
        <div className="flex h-[31px] flex-col justify-end bg-[#c4c4c4] px-[2px] pb-px font-['Liberation_Mono',monospace] text-[10px] leading-[13px] whitespace-pre text-[#111]">
          <p>Specify base point or [Displacement] &lt;Displacement&gt;:</p>
          <p>Specify second point or &lt;use first point as displacement&gt;:  &lt;Ortho off&gt;</p>
        </div>
        <div className="flex h-[17px] items-center border-t border-[#555] bg-white pl-[3px] text-[#555]">
          <Icon name="cmd" size="size-[14px]" />
          <svg viewBox="0 0 6 4" className="ml-px h-[4px] w-[6px]" fill="#555">
            <path d="M0 0h6L3 4z" />
          </svg>
          <input
            type="text"
            aria-label="Command"
            placeholder="Type a command"
            className="ml-[5px] w-full min-w-0 font-['Liberation_Mono',monospace] text-[10px] italic outline-none placeholder:text-[#777]"
          />
        </div>
      </div>
    </div>
  );
}

function StatusBar() {
  const caret = <Tool name="caret" width="w-[14px]" size="size-[13px]" />;
  return (
    <div className="flex h-[25px] shrink-0 justify-between bg-[#222831] text-[10px] text-[#c3c9d1]">
      <div className="flex h-[17px] items-center pl-[10px]">
        <button type="button" className="h-full w-[48px] rounded-b-md bg-[#3b4453] font-bold text-white">
          Model
        </button>
        <button type="button" className="ml-px h-full w-[52px] rounded-b-md bg-[#2a313c]">
          Layout1
        </button>
        <button type="button" className="ml-[2px] h-full w-[52px] rounded-b-md bg-[#2a313c]">
          Layout2
        </button>
        <button type="button" aria-label="New layout" className="ml-[2px] flex h-full w-[22px] items-center justify-center rounded-b-md bg-[#2a313c]">
          <Icon name="plus" size="size-[8px]" />
        </button>
      </div>
      <div className="flex gap-[2px] py-px pr-[2px] text-[#d8dce2]">
        <div className="flex bg-[#3b4453]">
          <button type="button" className="w-[41px] border-r border-[#222831] text-[#e4e7ea]">
            MODEL
          </button>
          <Tool name="grid" width="w-5" size="size-[14px]" />
          <Tool name="snap" width="w-5" size="size-[15px]" tone="bg-[#5a8bc4]" />
          {caret}
        </div>
        <div className="flex bg-[#3b4453]">
          <Tool name="ortho" width="w-5" size="size-[14px]" />
          <Tool name="polar" width="w-5" size="size-[14px]" />
          {caret}
          <Tool name="iso" width="w-5" size="size-[14px]" />
          {caret}
          <Tool name="otrack" width="w-5" size="size-[14px]" tone="border-r border-[#3b4453] bg-[#5a8bc4]" />
          <Tool name="osnap" width="w-5" size="size-[16px]" tone="bg-[#5a8bc4]" />
          {caret}
        </div>
        <div className="flex bg-[#3b4453]">
          <Tool name="annoVis" width="w-5" size="size-[15px]" />
          <Tool name="annoAuto" width="w-5" size="size-[15px]" />
          <Tool name="anno" width="w-5" size="size-[15px]" />
          <button type="button" className="flex w-[28px] items-center justify-center">
            1:1
            <Icon name="caret" size="size-[13px]" />
          </button>
        </div>
        <div className="flex bg-[#3b4453]">
          <Tool name="gear" width="w-5" size="size-[14px]" />
          {caret}
        </div>
        <div className="flex bg-[#3b4453]">
          <Tool name="plus" width="w-5" size="size-[15px]" />
        </div>
        <div className="flex bg-[#3b4453]">
          <Tool name="isolate" width="w-5" size="size-4" />
          <Tool name="hardware" width="w-5" size="size-[15px]" />
        </div>
        <div className="flex bg-[#3b4453]">
          <Tool name="clean" width="w-5" size="size-[14px]" />
          <Tool name="menu" width="w-5" size="size-[14px]" />
        </div>
      </div>
    </div>
  );
}

const apps: { name: string; running: boolean; active?: boolean; art: ReactNode }[] = [
  {
    name: 'Chrome',
    running: true,
    art: (
      <g>
        <circle cx="12" cy="12" r="10" fill="#fbc116" />
        <path d="M12 12L3.300 7a10 10 0 0 1 17.400 0z" fill="#e33b2e" />
        <path d="M12 12L3.300 7A10 10 0 0 0 11 22l5-8z" fill="#2da94f" />
        <circle cx="12" cy="12" r="5" fill="#fff" />
        <circle cx="12" cy="12" r="3.800" fill="#2f7de9" />
      </g>
    ),
  },
  {
    name: 'File Explorer',
    running: true,
    art: (
      <g>
        <path d="M2 4h7l2 3h11v14h-20z" fill="#f0b73a" />
        <path d="M2 9h20v11h-20z" fill="#fbd872" />
        <path d="M6 21v-6h12v6h-3v-3h-6v3z" fill="#3f93d8" />
      </g>
    ),
  },
  {
    name: 'Excel',
    running: false,
    art: (
      <g>
        <path d="M12 4h10v16h-10z" fill="#fff" stroke="#1e7145" />
        <path d="M14 7h6M14 10h6M14 13h6M14 16h6" stroke="#1e7145" strokeWidth="1.500" />
        <path d="M2 4l12-2v20l-12-2z" fill="#1e7145" />
        <path d="M5 8l5 8M10 8l-5 8" stroke="#fff" strokeWidth="1.800" />
      </g>
    ),
  },
  {
    name: 'VLC',
    running: false,
    art: (
      <g>
        <path d="M4 17h16l2 5h-20z" fill="#e97d0e" />
        <path d="M10.500 2h3l5 17c-3 2-10 2-13 0z" fill="#f58d1b" />
        <path d="M9.300 6h5.400l1 3.500h-7.400zM7.400 12.500h9.200l1 3.500h-11.200z" fill="#f4f4f4" />
      </g>
    ),
  },
  {
    name: 'AutoCAD',
    running: true,
    active: true,
    art: (
      <g>
        <path d="M1 1h22v22h-22z" fill="#f3eeee" />
        <path d="M5 19l5-14h4l5 14h-4l-1-3h-5l-1 3zM10 13h3l-1.500-5z" fill="#b3262b" fillRule="evenodd" />
      </g>
    ),
  },
  {
    name: 'PDF reader',
    running: true,
    art: (
      <g>
        <path d="M1 1h22v22h-22z" fill="#e3141b" />
        <path d="M15 19c3-2 3-12 6-14M14 13c3 0 5-1 7-4" stroke="#fff" fill="none" />
        <text x="3" y="15" fill="#fff" className="text-[7px] font-bold">PDF</text>
      </g>
    ),
  },
  {
    name: 'Snipping tool',
    running: true,
    art: (
      <g>
        <circle cx="11" cy="9" r="7" fill="#b9c4d0" />
        <circle cx="10" cy="8" r="4" fill="#1c3d6e" />
        <path d="M12 14l6-4 4 6-6 5z" fill="#2f66b0" />
        <path d="M8 18l8-2 3 4-8 2z" fill="#e2e6ea" />
      </g>
    ),
  },
  {
    name: 'Sticky Notes',
    running: true,
    art: (
      <g>
        <path d="M2 3h20v18h-20z" fill="#ffe100" />
        <path d="M12 21v-7h10z" fill="#222" />
        <path d="M12 21l10-7v7z" fill="#fff27a" />
      </g>
    ),
  },
];

function Taskbar() {
  return (
    <footer className="flex h-[33px] shrink-0 items-stretch bg-[#070a0a] text-[#f0f0f0]">
      <button type="button" aria-label="Start" className="flex w-[40px] items-center justify-center">
        <svg viewBox="0 0 16 16" className="size-[14px]" fill="#fff">
          <path d="M0 2.500l6.500-1v6h-6.500zM7.500 1.300l8.500-1.300v7.500h-8.500zM0 8.500h6.500v6l-6.500-1zM7.500 8.500h8.500v7.500l-8.500-1.300z" />
        </svg>
      </button>
      <label className="flex w-[287px] items-center gap-[9px] border border-[#999] bg-white pl-[9px] text-[#222]">
        <svg viewBox="0 0 16 16" className="size-[14px]" fill="none" stroke="#222" strokeWidth="1.300">
          <circle cx="10" cy="6" r="5" />
          <path d="M6.500 9.500L1 15" />
        </svg>
        <input type="text" aria-label="Search" placeholder="Type here to search" className="min-w-0 flex-1 text-[12px] outline-none placeholder:text-[#444]" />
      </label>
      <div className="ml-[2px] flex">
        {apps.map((a) => (
          <button key={a.name} type="button" aria-label={a.name} className={`flex w-[41px] flex-col items-center ${a.active ? 'bg-[#3a3d3d]' : ''}`}>
            <svg viewBox="0 0 24 24" className="my-auto size-[21px]">
              {a.art}
            </svg>
            <span className={`h-[2px] ${a.active ? 'w-full' : 'w-[33px]'} ${a.running ? 'bg-[#76b9ed]' : ''}`} />
          </button>
        ))}
      </div>
      <div className="ml-auto flex items-center text-[11px]">
        <svg viewBox="0 0 20 14" className="mr-[6px] h-[14px] w-5" fill="none" stroke="#f0f0f0" strokeWidth="1.300">
          <path d="M1 1h16v12h-14l-2-2zM17 3h2v10h-3M4 4h10M4 6.500h4v4h-4zM10 7h4M10 10h4" />
        </svg>
        <span className="w-[90px] whitespace-pre">29°C  Berawan</span>
        <svg viewBox="0 0 10 6" className="mr-[9px] h-[6px] w-[10px]" fill="none" stroke="#f0f0f0" strokeWidth="1.200">
          <path d="M.5 5.500L5 1l4.500 4.500" />
        </svg>
        <svg viewBox="0 0 12 16" className="mr-2 h-[15px] w-[11px]" fill="none" stroke="#f0f0f0" strokeWidth="1.200">
          <path d="M2 4.500h6v7h-6zM8 7l3-1.500v5l-3-1.500M2 2.500c2-2 5-2 7 0M2 13.500c2 2 5 2 7 0" />
        </svg>
        <svg viewBox="0 0 16 14" className="mr-[6px] h-[13px] w-[14px]" fill="none" stroke="#f0f0f0" strokeWidth="1.200">
          <path d="M4 2.500h11v7h-9M10 10v3M7 13h6M1 1h3v4h-3zM2.500 5v6h3" />
        </svg>
        <svg viewBox="0 0 16 14" className="mr-[6px] h-[13px] w-[14px]" fill="none" stroke="#f0f0f0" strokeWidth="1.200">
          <path d="M1 5h2.500l3-3v10l-3-3h-2.500zM9 5c1 1 1 3 0 4M11 3c2 2 2 6 0 8M13 1.500c3 3 3 8 0 11" />
        </svg>
        <time className="w-[54px] text-center text-[10px] leading-[15px]">
          15:15
          <br />
          09/06/2026
        </time>
        <button type="button" aria-label="Notifications" className="relative mr-[11px] ml-[9px] size-[22px]">
          <svg viewBox="0 0 16 16" className="size-[15px]">
            <path d="M0 1h15v10h-8l-3 4v-4h-4z" fill="#f4f4f4" />
            <path d="M3 4h9M3 6.500h9" stroke="#111" />
          </svg>
          <span className="absolute right-0 bottom-0 flex size-[14px] items-center justify-center rounded-full border border-[#666] bg-[#222] text-[9px]">6</span>
        </button>
        <span className="mr-[3px] h-full w-px bg-[#3d4040]" />
      </div>
    </footer>
  );
}

export default function App() {
  return (
    <div className="flex min-h-screen flex-col bg-[#222831] font-[Roboto,'Open_Sans',sans-serif] leading-none">
      <Header />
      <FileTabs />
      <Toolbars />
      <main className="relative flex flex-1">
        <div className="flex min-w-0 flex-1 flex-col">
          <div className="flex flex-1">
            <SideTools />
            <div className="relative flex-1 overflow-hidden bg-[#212830]">
              <Drawing />
              <p className="relative pt-[7px] pl-[3px] text-[10px] text-[#d4d7db]">[−][Top][2D Wireframe]</p>
            </div>
          </div>
          <CommandLine />
        </div>
        <Properties />
        {/* activation watermark, sits over every panel */}
        <div className="pointer-events-none absolute right-[51px] bottom-[9px] w-[197px] text-[#a2a5aa]/60">
          <p className="text-[16px] leading-[20px]">Activate Windows</p>
          <p className="text-[12px] leading-[16px]">Go to Settings to activate Windows.</p>
        </div>
      </main>
      <StatusBar />
      <Taskbar />
    </div>
  );
}
